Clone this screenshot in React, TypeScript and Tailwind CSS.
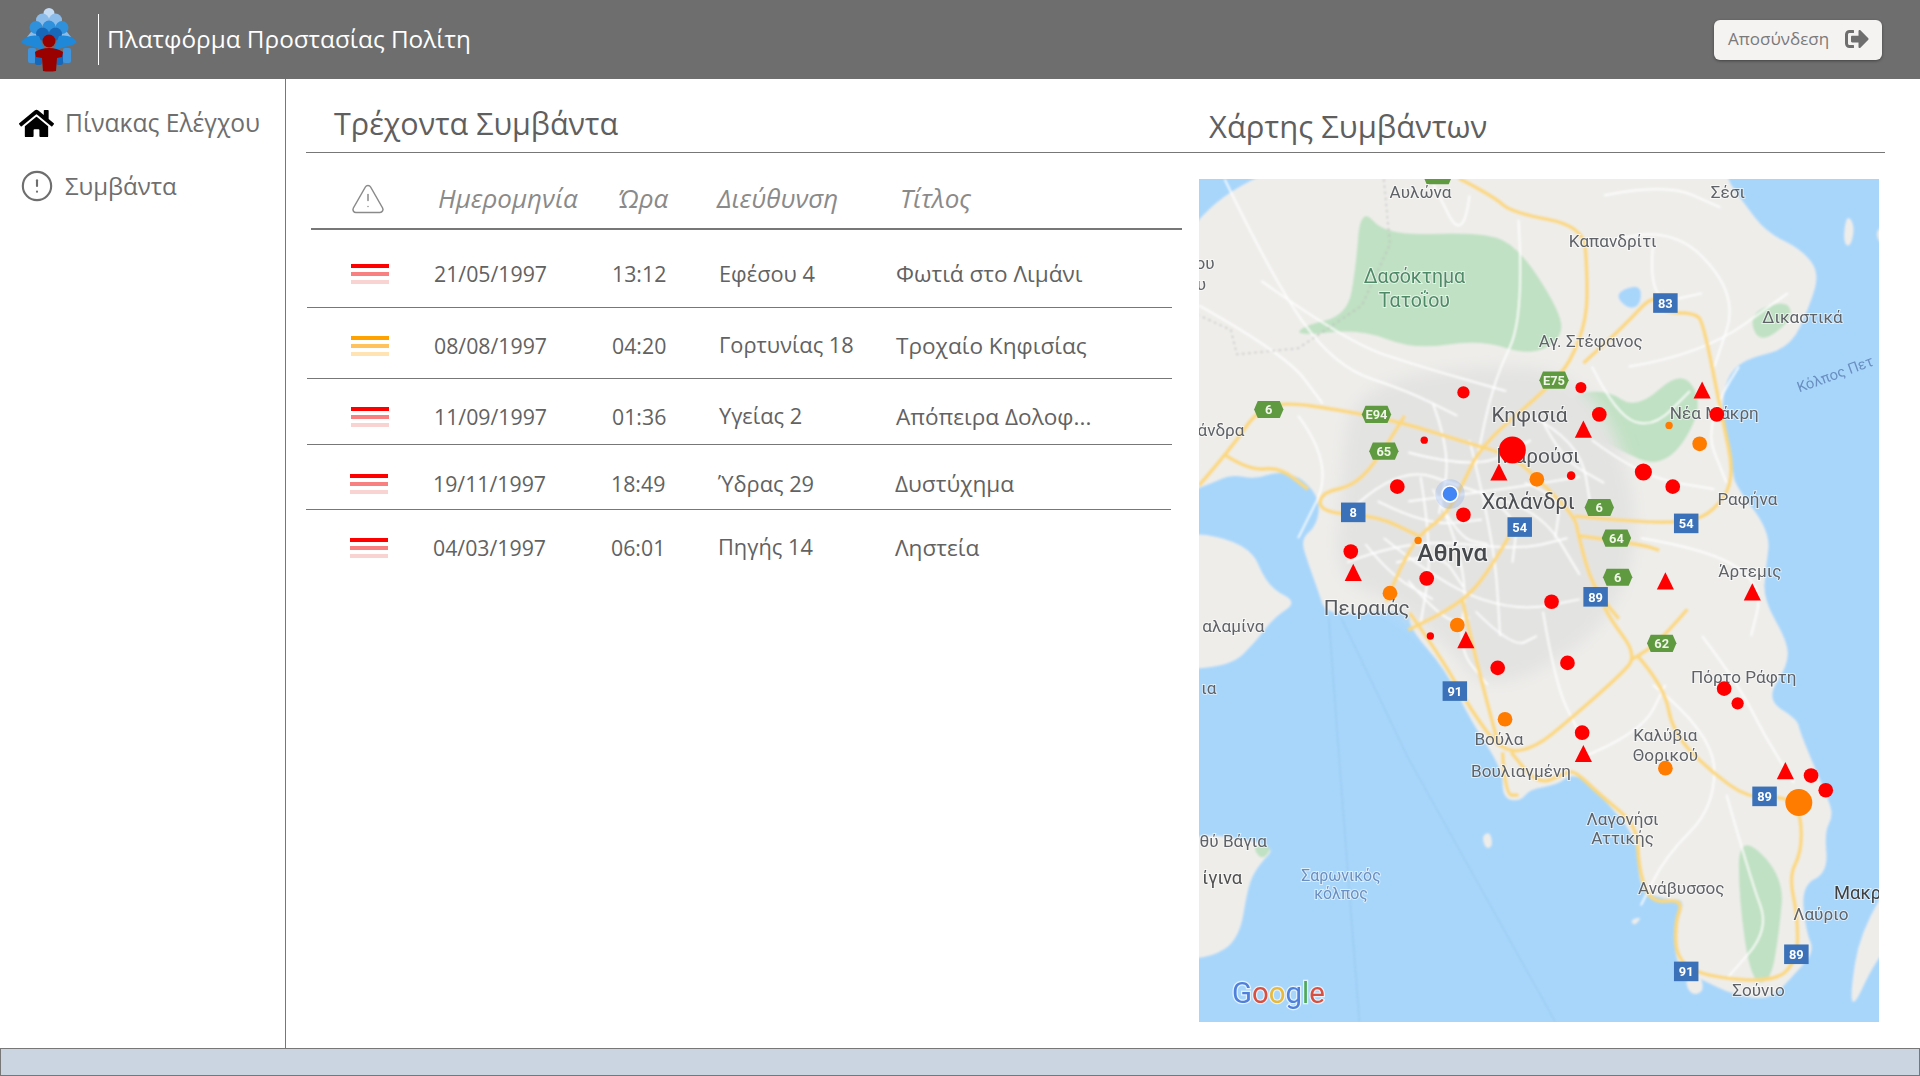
import React from 'react';
import { FaHome, FaSignOutAlt } from 'react-icons/fa';
import { AlertCircle, TriangleAlert } from 'lucide-react';

const events = [
  { date: '21/05/1997', time: '13:12', address: 'Εφέσου 4', title: 'Φωτιά στο Λιμάνι', level: 'red', row: 'h-[78px] pt-[11px] ml-[1px] border-b' },
  { date: '08/08/1997', time: '04:20', address: 'Γορτυνίας 18', title: 'Τροχαίο Κηφισίας', level: 'orange', row: 'h-[71px] pt-[5px] ml-[1px] border-b' },
  { date: '11/09/1997', time: '01:36', address: 'Υγείας 2', title: 'Απόπειρα Δολοφ...', level: 'red', row: 'h-[66px] pt-[10px] ml-[1px] border-b' },
  { date: '19/11/1997', time: '18:49', address: 'Ύδρας 29', title: 'Δυστύχημα', level: 'red', row: 'h-[65px] pt-[14px] ml-0 border-b' },
  { date: '04/03/1997', time: '06:01', address: 'Πηγής 14', title: 'Ληστεία', level: 'red', row: 'h-[74px] pt-[1px] ml-0' },
];

const SeverityBars = ({ level }: { level: string }) => (
  <div className="flex w-[38px] flex-col gap-[4px]">
    <div className={`h-[4px] ${level === 'red' ? 'bg-[#ff0000]' : 'bg-[#ffa200]'}`} />
    <div className={`h-[4px] ${level === 'red' ? 'bg-[#f98080]' : 'bg-[#ffc25c]'}`} />
    <div className={`h-[4px] ${level === 'red' ? 'bg-[#f9d2d2]' : 'bg-[#ffe3b3]'}`} />
  </div>
);

const Logo = () => (
  <svg width="64" height="66" viewBox="0 0 64 66" className="shrink-0">
    <circle cx="32" cy="6.5" r="5.5" fill="#c4dcf4" />
    <circle cx="25.5" cy="13" r="6.5" fill="#8cbcea" />
    <circle cx="38.5" cy="13" r="6.5" fill="#8cbcea" />
    <path d="M10 30 L18 20 L46 20 L54 30Z" fill="#8cbcea" />
    <circle cx="19" cy="20.5" r="6.5" fill="#2f90dc" />
    <circle cx="32" cy="20" r="6.5" fill="#2f90dc" />
    <circle cx="45" cy="20.5" r="6.5" fill="#2f90dc" />
    <circle cx="25.5" cy="27" r="6.5" fill="#1768b8" />
    <circle cx="38.5" cy="27" r="6.5" fill="#1768b8" />
    <path d="M4 35 Q10 27 22 29 L28 44 L17 40 Q8 39 4 35Z" fill="#1f88d8" />
    <path d="M60 35 Q54 27 42 29 L36 44 L47 40 Q56 39 60 35Z" fill="#1f88d8" />
    <rect x="11" y="41" width="8" height="15" rx="2" fill="#3f94dc" />
    <rect x="46" y="41" width="8" height="15" rx="2" fill="#3f94dc" />
    <rect x="18" y="44" width="7" height="14" rx="2" fill="#1768b8" />
    <rect x="39" y="44" width="7" height="14" rx="2" fill="#1768b8" />
    <circle cx="32" cy="34" r="6.5" fill="#990000" />
    <path d="M18 45 Q24 41 32 41 Q40 41 46 45 L45 50 L40 51 L39 64 Q32 65 26 64 L25 51 L19 50Z" fill="#990000" />
  </svg>
);

// midpoint smoothing, so coasts and roads don't look like straight segments
const smooth = (src: string, closed: boolean) => {
  const n = src.match(/-?\d+(\.\d+)?/g)!.map(Number);
  const pts: [number, number][] = [];
  for (let i = 0; i < n.length; i += 2) pts.push([n[i], n[i + 1]]);
  const mid = (a: [number, number], b: [number, number]) => `${(a[0] + b[0]) / 2},${(a[1] + b[1]) / 2}`;
  if (closed) {
    let d = `M${mid(pts[pts.length - 1], pts[0])}`;
    pts.forEach((p, i) => { d += ` Q${p[0]},${p[1]} ${mid(p, pts[(i + 1) % pts.length])}`; });
    return d + 'Z';
  }
  let d = `M${pts[0][0]},${pts[0][1]}`;
  for (let i = 1; i < pts.length - 1; i++) d += ` Q${pts[i][0]},${pts[i][1]} ${mid(pts[i], pts[i + 1])}`;
  const last = pts[pts.length - 1];
  return `${d} L${last[0]},${last[1]}`;
};

const land = '950,120 1405,120 1410,147 1424,166 1442,190 1471,204 1486,223 1478,250 1462,285 1424,294 1409,310 1406,340 1415,384 1417,397 1446,435 1442,465 1440,490 1460,525 1460,544 1442,572 1468,588 1470,599 1493,653 1497,667 1490,680 1493,713 1471,724 1475,762 1482,778 1464,798 1446,817 1417,814 1388,800 1368,789 1368,757 1377,735 1358,735 1338,727 1338,686 1307,650 1286,631 1271,642 1249,645 1242,655 1227,653 1227,629 1202,591 1180,547 1151,514 1151,498 1096,503 1081,498 1078,488 1068,460 1062,441 1075,430 1078,410 1065,392 1045,385 1025,392 1005,388 990,395 950,410';
const islands = [
  '950,432 1020,443 1035,480 1060,492 1040,505 1025,525 1005,545 950,548',
  '950,678 1045,689 1027,708 1019,724 1012,768 987,784 950,783',
  '1550,710 1519,762 1511,812 1514,823 1529,790 1550,762',
  '1508,175 1515,185 1511,203 1505,198',
  '1527,190 1550,180 1550,215',
  '1210,683 1217,680 1219,692 1213,694',
  '1331,752 1341,749 1335,757',
  '1375,800 1388,796 1392,810 1381,814',
];
const parks = [
  '1111,169 1132,193 1205,190 1238,199 1275,256 1275,278 1249,291 1209,278 1154,286 1111,269 1059,275 1063,267 1100,258 1107,220',
  '1278,324 1311,318 1337,335 1373,302 1391,329 1373,367 1351,381 1326,370 1300,356',
  '1420,680 1457,716 1453,762 1446,803 1430,803 1420,735',
  '1428,256 1460,245 1464,262 1436,282',
  '1022,690 1040,692 1030,704',
];
const highways = [
  'M1191,146 L1220,161 L1234,174 L1293,185 L1296,220 L1296,261 L1282,297 L1267,313 L1256,324 L1209,365 L1194,397 L1180,422 L1158,438 L1143,465 L1132,492',
  'M979,397 L1005,367 L1027,335 L1049,329 L1092,335 L1143,345 L1198,362 L1235,373 L1256,392 L1286,422 L1289,438 L1300,479 L1322,506',
  'M1286,422 L1337,427 L1377,427 L1399,419 L1417,392 L1406,340 L1391,264 L1384,256 L1358,256 L1351,240 L1326,267 L1293,297',
  'M1147,340 L1129,370 L1107,397 L1078,403 L1078,419 L1125,422 L1158,438',
  'M1151,501 L1176,536 L1202,582 L1227,615 L1253,612 L1282,588 L1322,553 L1337,536 L1315,506 L1307,490',
  'M1194,490 L1205,539 L1224,610',
  'M1337,536 L1359,561 L1366,599 L1395,629 L1428,653 L1461,651 L1471,667 L1471,697 L1461,716 L1468,749 L1468,784 L1450,803 L1391,798 L1369,784 L1368,754 L1375,735 L1347,738 L1338,708 L1337,675 L1307,650 L1286,630 L1278,632 L1256,642 L1234,615',
  'M1378,498 L1355,525 L1333,539',
  'M1289,438 L1340,445 L1355,450',
  'M1000,372 L1020,385 L1045,382 L1068,400',
  'M1240,425 L1215,470 L1190,495 L1150,515',
  'M1227,615 L1229,650 L1240,650',
];
const streets = [
  'M1000,147 L1040,230 L1090,300 L1150,320 L1190,340',
  'M1030,230 L1100,280 L1160,300 L1230,320',
  'M1240,180 L1245,260 L1220,310 L1205,380',
  'M1310,200 L1360,180 L1420,240 L1400,300',
  'M1330,300 L1390,290 L1460,240',
  'M1300,360 L1340,390 L1400,400',
  'M1340,440 L1400,450 L1440,480 L1430,520',
  'M1390,520 L1420,560 L1440,600 L1465,640',
  'M1350,560 L1400,600 L1400,660 L1360,700 L1340,740',
  'M1290,620 L1340,600 L1360,560',
  'M1410,650 L1430,720 L1445,760 L1410,800',
  'M1100,420 L1140,380 L1200,400 L1260,420 L1290,470',
  'M1130,440 L1180,480 L1240,500 L1290,490',
  'M1160,390 L1170,450 L1160,510',
  'M1200,360 L1220,440 L1225,520',
  'M1100,460 L1150,440 L1240,450 L1280,440',
  'M1150,410 L1230,400 L1290,390',
  'M1180,420 L1200,470 L1190,530 L1215,560',
  'M1260,500 L1270,560 L1290,600',
  'M1060,340 L1090,380 L1060,440',
  'M979,250 L1050,290 L1080,330',
  'M1300,300 L1320,340 L1350,350 L1380,320',
  'M1250,340 L1290,360 L1300,420',
  'M1170,330 L1185,370 L1175,420',
  'M1150,370 L1205,385 L1250,360',
  'M1125,410 L1165,430 L1210,425',
  'M1140,460 L1175,450 L1195,480',
  'M1210,405 L1240,420 L1235,460',
  'M1170,400 L1190,440 L1215,445',
  'M1245,395 L1275,405 L1270,440',
  'M1115,445 L1135,470 L1170,490',
  'M1205,500 L1235,530 L1255,520',
  'M1150,475 L1180,510 L1200,505',
  'M1260,345 L1275,375 L1310,395',
  'M1310,160 L1360,150 L1405,170',
  'M1200,160 L1195,200 L1170,150',
  'M1350,200 L1345,250 L1390,240',
  'M1420,300 L1390,345 L1410,395',
];
const labels: [string, number, number, number, string][] = [
  ['Αυλώνα', 1160, 162, 14, '#5f6368'], ['Σέσι', 1411, 162, 14, '#5f6368'], ['Καπανδρίτι', 1317, 202, 14, '#5f6368'],
  ['Δασόκτημα', 1155, 232, 16, '#4f8a68'], ['Τατοΐου', 1155, 251, 16, '#4f8a68'], ['Αγ. Στέφανος', 1299, 284, 14, '#5f6368'],
  ['Δικαστικά', 1472, 264, 14, '#5f6368'], ['Κηφισιά', 1249, 345, 17, '#55585c'], ['Νέα Μάκρη', 1400, 343, 14, '#5f6368'],
  ['άνδρα', 997, 357, 14, '#5f6368'], ['Μαρούσι', 1256, 379, 17, '#55585c'], ['Χαλάνδρι', 1248, 416, 18, '#4d5054'],
  ['Ραφήνα', 1427, 413, 14, '#5f6368'], ['Άρτεμις', 1429, 472, 14, '#5f6368'], ['Πειραιάς', 1116, 503, 17, '#55585c'],
  ['αλαμίνα', 1007, 517, 14, '#5f6368'], ['ια', 987, 567, 14, '#5f6368'], ['Πόρτο Ράφτη', 1424, 558, 14, '#5f6368'],
  ['Βούλα', 1224, 609, 14, '#5f6368'], ['Καλύβια', 1360, 606, 14, '#5f6368'], ['Θορικού', 1360, 622, 14, '#5f6368'],
  ['Βουλιαγμένη', 1242, 635, 14, '#5f6368'], ['Λαγονήσι', 1325, 674, 14, '#5f6368'], ['Αττικής', 1325, 690, 14, '#5f6368'],
  ['θύ Βάγια', 1007, 692, 14, '#5f6368'], ['ίγινα', 998, 723, 15, '#505050'], ['Σαρωνικός', 1095, 720, 13, '#6a8fc0'],
  ['κόλπος', 1095, 735, 13, '#6a8fc0'], ['Ανάβυσσος', 1373, 731, 14, '#5f6368'], ['Μακρ', 1517, 735, 15, '#404040'],
  ['Λαύριο', 1487, 752, 14, '#5f6368'], ['Σούνιο', 1436, 814, 14, '#5f6368'], ['ου', 984, 220, 14, '#5f6368'], ['υ', 981, 237, 14, '#5f6368'],
];
const greenShields: [string, number, number][] = [['6', 1036, 335], ['E94', 1124, 339], ['65', 1130, 369], ['E75', 1269, 311], ['6', 1306, 415], ['64', 1320, 440], ['6', 1321, 472], ['62', 1357, 526], ['', 1174, 144]];
const blueShields: [string, number, number][] = [['8', 1105, 419], ['54', 1241, 431], ['54', 1377, 428], ['83', 1360, 248], ['89', 1303, 488], ['91', 1188, 565], ['89', 1441, 651], ['89', 1467, 780], ['91', 1377, 794]];
const redDots = [[1195, 321, 5], [1291, 317, 4.5], [1306, 339, 6], [1402, 339, 6], [1163, 360, 3], [1235, 368, 11], [1283, 389, 3.5], [1342, 386, 7], [1366, 398, 6], [1141, 398, 6], [1195, 421, 6], [1103, 451, 6], [1165, 473, 6], [1267, 492, 6], [1168, 520, 3], [1223, 546, 6], [1280, 542, 6], [1408, 563, 6], [1419, 575, 5], [1292, 599, 6], [1479, 634, 6], [1491, 646, 6]];
const orangeDots = [[1363, 348, 3], [1388, 363, 6], [1255, 392, 6], [1158, 442, 3], [1135, 485, 6], [1190, 511, 6], [1229, 588, 6], [1360, 628, 6], [1469, 656, 11]];
const triangles = [[1390, 319], [1293, 351], [1224, 386], [1105, 468], [1360, 475], [1431, 484], [1197, 523], [1293, 616], [1458, 630]];

const EventsMap = () => (
  <svg viewBox="979 147 555.5 688" className="block h-[843px] w-[680px] bg-[#a8d6fb] font-['Roboto',sans-serif]">
    <defs>
      <filter id="soft" x="-5%" y="-5%" width="110%" height="110%"><feGaussianBlur stdDeviation="0.7" /></filter>
      <filter id="softer" x="-10%" y="-10%" width="120%" height="120%"><feGaussianBlur stdDeviation="6" /></filter>
      <filter id="label"><feGaussianBlur stdDeviation="0.3" /></filter>
    </defs>
    <g filter="url(#soft)">
      <path d={smooth(land, true)} fill="#eeedea" />
      {islands.map((p) => <path key={p} d={smooth(p, true)} fill="#eeedea" />)}
      {parks.map((p) => <path key={p} d={smooth(p, true)} fill="#c0e1c3" />)}
      <path d={smooth('1318,240 1340,232 1340,250 1329,253', true)} fill="#a8d6fb" />
      <path d={smooth('1100,325 1170,300 1300,300 1345,430 1310,520 1215,570 1180,525 1135,490 1090,475 1095,400', true)} fill="#e3e3e2" filter="url(#softer)" />
      <path d="M1085,505 L1095,640 L1110,835 M1095,505 L1150,620 L1270,835" fill="none" stroke="#94c4ea" strokeWidth="0.7" />
      {streets.map((d) => <path key={d} d={smooth(d, false)} fill="none" stroke="#ffffff" strokeWidth="1.4" />)}
      {highways.map((d) => <path key={d} d={smooth(d, false)} fill="none" stroke="#fbd87e" strokeWidth="3" strokeLinejoin="round" />)}
      <path d="M1130,147 L1135,200 L1112,250 L1060,285 L1010,290 L1005,270 L979,258" fill="none" stroke="#b9b9b9" strokeWidth="1" strokeDasharray="2 3" />
    </g>
    <g filter="url(#label)">
      {greenShields.map(([t, x, y]) => (
        <g key={`${t}${x}`}>
          <polygon points={`${x - 12},${y} ${x - 9},${y - 7} ${x + 9},${y - 7} ${x + 12},${y} ${x + 9},${y + 7} ${x - 9},${y + 7}`} fill="#5f9a3f" />
          <text x={x} y={y + 4} textAnchor="middle" fontSize="10.5" fontWeight="700" fill="#f0f6e8">{t}</text>
        </g>
      ))}
      {blueShields.map(([t, x, y]) => (
        <g key={`${t}${x}`}>
          <rect x={x - 10} y={y - 8} width="20" height="16" fill="#3a71b8" />
          <text x={x} y={y + 4} textAnchor="middle" fontSize="10.5" fontWeight="700" fill="#ffffff">{t}</text>
        </g>
      ))}
      {labels.map(([t, x, y, s, c]) => (
        <text key={`${t}${x}`} x={x} y={y} textAnchor="middle" fontSize={s} fill={c} stroke="#ffffff" strokeOpacity="0.6" strokeWidth="1.5" className="[paint-order:stroke]">{t}</text>
      ))}
      <text x="1186" y="459" textAnchor="middle" fontSize="20" fontWeight="500" fill="#45484c" stroke="#ffffff" strokeOpacity="0.6" strokeWidth="2" className="[paint-order:stroke]">Αθήνα</text>
      <text x="1500" y="310" fontSize="12" fill="#6a8fc0" transform="rotate(-20 1500 310)" textAnchor="middle">Κόλπος Πετ</text>
      <text x="1006" y="820" fontSize="24" stroke="#ffffff" strokeOpacity="0.7" strokeWidth="2" className="[paint-order:stroke]">
        <tspan fill="#4f80dc">G</tspan><tspan fill="#d9503f">o</tspan><tspan fill="#e8b93a">o</tspan><tspan fill="#4f80dc">g</tspan><tspan fill="#4ea95a">l</tspan><tspan fill="#d9503f">e</tspan>
      </text>
      <circle cx="1184" cy="404" r="12" fill="#4285f4" fillOpacity="0.18" />
      <circle cx="1184" cy="404" r="6.5" fill="#4285f4" stroke="#ffffff" strokeWidth="1.2" />
      {redDots.map(([x, y, r]) => <circle key={`${x}${y}`} cx={x} cy={y} r={r} fill="#ff0000" />)}
      {orangeDots.map(([x, y, r]) => <circle key={`${x}${y}`} cx={x} cy={y} r={r} fill="#ff7b00" />)}
      {triangles.map(([x, y]) => <polygon key={`${x}${y}`} points={`${x},${y - 7} ${x + 7},${y + 7} ${x - 7},${y + 7}`} fill="#ff0000" />)}
    </g>
  </svg>
);

export default function App() {
  return (
    <div className="flex h-screen flex-col overflow-hidden bg-white font-['Open_Sans',sans-serif] text-[#6e6e6e]">
      <header className="flex h-[79px] shrink-0 items-center bg-[#6e6e6e] pl-[17px] pr-[38px]">
        <Logo />
        <div className="ml-[17px] h-[51px] w-px bg-white" />
        <h1 className="ml-[8px] text-[24.3px] font-normal text-white">Πλατφόρμα Προστασίας Πολίτη</h1>
        <button className="ml-auto flex h-[40px] w-[168px] items-center justify-between rounded-md bg-[#f5f2f2] pb-[2px] pl-[14px] pr-[12px] text-[17px] text-[#7a7a7a] shadow-[0_1px_3px_rgba(0,0,0,0.4)]">
          <span>Αποσύνδεση</span>
          <FaSignOutAlt className="h-[24px] w-[26px] text-[#6e6e6e]" />
        </button>
      </header>

      <div className="flex min-h-0 flex-1">
        <aside className="w-[286px] shrink-0 border-r border-[#777777] pl-[19px] pt-[24px]">
          <div className="flex h-[40px] items-center gap-[11px]">
            <FaHome className="h-[37px] w-[35px] text-black" />
            <span className="text-[24.6px]">Πίνακας Ελέγχου</span>
          </div>
          <div className="mt-[23px] flex h-[40px] items-center gap-[11px] pl-px">
            <AlertCircle className="h-[34px] w-[34px] text-[#6e6e6e]" strokeWidth={1.5} />
            <span className="text-[24px]">Συμβάντα</span>
          </div>
        </aside>

        <main className="flex min-w-0 flex-1 flex-col pl-[20px] pr-[35px]">
          <div className="flex h-[74px] shrink-0 border-b border-[#777777] text-[#5f5f5f]">
            <h2 className="w-[903px] pl-[28px] pt-[23px] text-[30.5px] font-normal leading-[42px]">Τρέχοντα Συμβάντα</h2>
            <h2 className="pt-[26px] text-[31px] font-normal leading-[42px]">Χάρτης Συμβάντων</h2>
          </div>

          <div className="flex flex-1 pt-[26px]">
            <section className="-mt-[26px] w-[893px] shrink-0">
              <div className="ml-[5px] grid h-[77px] w-[871px] grid-cols-[127px_180px_99px_183px_1fr] items-center border-b-2 border-[#777777] pt-[16px] text-[26px] italic text-[#8a8a8a]">
                <TriangleAlert className="ml-[39px] h-[36px] w-[36px] text-[#8a8a8a]" strokeWidth={1} />
                <span>Ημερομηνία</span>
                <span>Ώρα</span>
                <span>Διεύθυνση</span>
                <span>Τίτλος</span>
              </div>
              {events.map((ev) => (
                <div key={ev.date} className={`grid w-[865px] grid-cols-[127px_178px_107px_177px_1fr] items-center border-[#777777] text-[#626262] ${ev.row}`}>
                  <div className="pl-[44px]"><SeverityBars level={ev.level} /></div>
                  <span className="text-[21.3px]">{ev.date}</span>
                  <span className="text-[21.3px]">{ev.time}</span>
                  <span className="text-[21.8px]">{ev.address}</span>
                  <span className="text-[22.6px]">{ev.title}</span>
                </div>
              ))}
            </section>
            <div><EventsMap /></div>
          </div>
        </main>
      </div>

      <footer className="h-[28px] shrink-0 border border-[#777777] bg-[#cbd5e1]" />
    </div>
  );
}
